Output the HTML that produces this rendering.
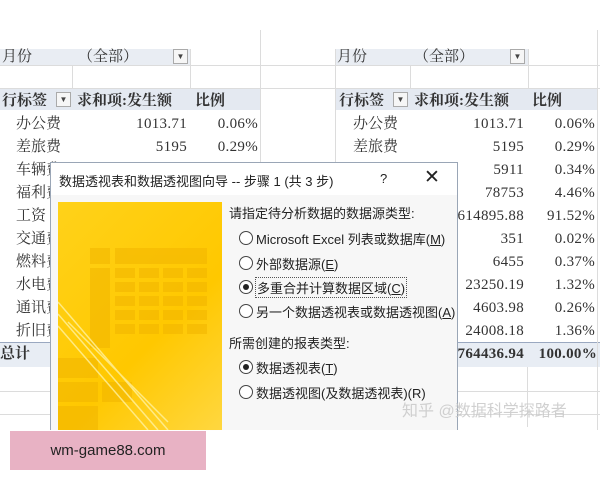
<!DOCTYPE html><html><head><meta charset="utf-8"><style>
*{margin:0;padding:0;box-sizing:border-box}
body{width:600px;height:480px;background:#fff;position:relative;overflow:hidden;font-family:"Liberation Serif","Noto Serif CJK SC",serif;color:#333}
.a{position:absolute;white-space:nowrap}
.s{font-family:"Liberation Sans","Noto Sans CJK SC",sans-serif;color:#222}
.hl{position:absolute;height:1px;background:#dcdcdc}
.vl{position:absolute;width:1px;background:#dcdcdc}
.r{position:absolute;width:14px;height:14px;border:1px solid #444;border-radius:50%;background:#fff}
.r.on::after{content:"";position:absolute;left:3px;top:3px;width:6px;height:6px;border-radius:50%;background:#222}
.dd{position:absolute;width:15px;height:15px;border:1px solid #aaa;background:#f6f6f6;font-size:8px;text-align:center;line-height:13px;color:#444}
.n{letter-spacing:0.3px}
</style></head><body>
<div class="a" style="left:0;top:49px;width:190px;height:16px;background:#e9edf3"></div>
<div class="a" style="left:335px;top:49px;width:193px;height:16px;background:#e9edf3"></div>
<div class="a" style="left:0;top:88px;width:260px;height:22px;background:#e4e9f1"></div>
<div class="a" style="left:335px;top:88px;width:262px;height:22px;background:#e4e9f1"></div>
<div class="a" style="left:0;top:342px;width:600px;height:25px;background:#e8edf4;border-top:1px solid #9aa8c0"></div>
<div class="hl" style="left:0;top:65px;width:600px"></div>
<div class="hl" style="left:0;top:88px;width:600px"></div>
<div class="hl" style="left:0;top:391px;width:600px"></div>
<div class="hl" style="left:0;top:414px;width:600px"></div>
<div class="vl" style="left:72px;top:65px;height:23px"></div>
<div class="vl" style="left:190px;top:49px;height:39px"></div>
<div class="vl" style="left:260px;top:30px;height:400px"></div>
<div class="vl" style="left:335px;top:49px;height:381px"></div>
<div class="vl" style="left:410px;top:65px;height:23px"></div>
<div class="vl" style="left:528px;top:49px;height:39px"></div>
<div class="vl" style="left:597px;top:30px;height:400px"></div>
<div class="vl" style="left:527px;top:367px;height:60px"></div>

<div class="a" style="left:2px;top:45px;font-size:15px">月份</div>
<div class="a" style="left:78px;top:45px;font-size:15px">（全部）</div>
<div class="dd" style="left:173px;top:49px">▼</div>
<div class="a" style="left:337px;top:45px;font-size:15px">月份</div>
<div class="a" style="left:414px;top:45px;font-size:15px">（全部）</div>
<div class="dd" style="left:510px;top:49px">▼</div>

<div class="a" style="left:2px;top:89px;font-size:15px;font-weight:bold">行标签</div>
<div class="dd" style="left:56px;top:92px">▼</div>
<div class="a" style="left:77px;top:89px;font-size:15px;font-weight:bold">求和项:发生额</div>
<div class="a" style="left:195px;top:89px;font-size:15px;font-weight:bold">比例</div>
<div class="a" style="left:339px;top:89px;font-size:15px;font-weight:bold">行标签</div>
<div class="dd" style="left:393px;top:92px">▼</div>
<div class="a" style="left:414px;top:89px;font-size:15px;font-weight:bold">求和项:发生额</div>
<div class="a" style="left:532px;top:89px;font-size:15px;font-weight:bold">比例</div>

<div class="a" style="left:16px;top:113px;font-size:15px;line-height:23px">办公费<br>差旅费<br>车辆费<br>福利费<br>工资<br>交通费<br>燃料费<br>水电费<br>通讯费<br>折旧费</div>
<div class="a" style="left:0;top:342px;font-size:15px;line-height:25px;font-weight:bold">总计</div>
<div class="a n" style="left:16px;top:113px;width:171px;text-align:right;font-size:15px;line-height:23px">1013.71<br>5195</div>
<div class="a n" style="left:190px;top:113px;width:68px;text-align:right;font-size:15px;line-height:23px">0.06%<br>0.29%</div>

<div class="a" style="left:353px;top:113px;font-size:15px;line-height:23px">办公费<br>差旅费</div>
<div class="a n" style="left:400px;top:113px;width:124px;text-align:right;font-size:15px;line-height:23px">1013.71<br>5195<br>5911<br>78753<br>614895.88<br>351<br>6455<br>23250.19<br>4603.98<br>24008.18</div>
<div class="a n" style="left:527px;top:113px;width:68px;text-align:right;font-size:15px;line-height:23px">0.06%<br>0.29%<br>0.34%<br>4.46%<br>91.52%<br>0.02%<br>0.37%<br>1.32%<br>0.26%<br>1.36%</div>
<div class="a n" style="left:400px;top:342px;width:124px;text-align:right;font-size:15px;line-height:25px;font-weight:bold">764436.94</div>
<div class="a n" style="left:527px;top:342px;width:70px;text-align:right;font-size:15px;line-height:25px;font-weight:bold">100.00%</div>

<div class="a" style="left:50px;top:162px;width:408px;height:268px;background:#f7f7f7;border:1px solid #9aa6b6;border-bottom:none"></div>
<div class="a" style="left:51px;top:163px;width:406px;height:32px;background:#fff"></div>
<div class="a s" style="left:59px;top:171px;font-size:13px">数据透视表和数据透视图向导 -- 步骤 1 (共 3 步)</div>
<div class="a s" style="left:380px;top:171px;font-size:13px">?</div>
<div class="a s" style="left:424px;top:166px;font-size:19px;font-weight:300">✕</div>
<div class="a" style="left:58px;top:202px;width:164px;height:228px;background:linear-gradient(135deg,#ffd21a,#ffc800 60%,#ffd740)">
<svg width="164" height="228" style="position:absolute;left:0;top:0">
<g fill="#f2b500" opacity=".55">
<rect x="32" y="46" width="20" height="16"/><rect x="57" y="46" width="92" height="16"/>
<rect x="32" y="66" width="20" height="80"/>
<g><rect x="57" y="66" width="20" height="10"/><rect x="81" y="66" width="20" height="10"/><rect x="105" y="66" width="20" height="10"/><rect x="129" y="66" width="20" height="10"/>
<rect x="57" y="80" width="20" height="10"/><rect x="81" y="80" width="20" height="10"/><rect x="105" y="80" width="20" height="10"/><rect x="129" y="80" width="20" height="10"/>
<rect x="57" y="94" width="20" height="10"/><rect x="81" y="94" width="20" height="10"/><rect x="105" y="94" width="20" height="10"/><rect x="129" y="94" width="20" height="10"/>
<rect x="57" y="108" width="20" height="10"/><rect x="81" y="108" width="20" height="10"/><rect x="105" y="108" width="20" height="10"/><rect x="129" y="108" width="20" height="10"/>
<rect x="57" y="122" width="20" height="10"/><rect x="81" y="122" width="20" height="10"/><rect x="105" y="122" width="20" height="10"/><rect x="129" y="122" width="20" height="10"/></g>
<rect x="0" y="156" width="40" height="20"/><rect x="0" y="180" width="40" height="20"/><rect x="44" y="180" width="30" height="20"/><rect x="0" y="204" width="40" height="24"/></g>
<g stroke="#fff2a0" stroke-width="1.5" fill="none" opacity=".8"><path d="M0 100 L110 228"/><path d="M0 112 L100 228"/><path d="M0 124 L90 228"/><path d="M10 120 L110 220"/></g>
</svg></div>
<div class="a s" style="left:229px;top:203px;font-size:13px">请指定待分析数据的数据源类型:</div>
<div class="r" style="left:239px;top:231px"></div><div class="a s" style="left:256px;top:229px;font-size:13px">Microsoft Excel 列表或数据库(<u>M</u>)</div>
<div class="r" style="left:239px;top:256px"></div><div class="a s" style="left:256px;top:254px;font-size:13px">外部数据源(<u>E</u>)</div>
<div class="r on" style="left:239px;top:280px"></div><div class="a s" style="left:255px;top:277px;font-size:13px;border:1px dotted #555;padding:0 1px">多重合并计算数据区域(<u>C</u>)</div>
<div class="r" style="left:239px;top:304px"></div><div class="a s" style="left:256px;top:302px;font-size:13px">另一个数据透视表或数据透视图(<u>A</u>)</div>
<div class="a s" style="left:229px;top:333px;font-size:13px">所需创建的报表类型:</div>
<div class="r on" style="left:239px;top:360px"></div><div class="a s" style="left:256px;top:358px;font-size:13px">数据透视表(<u>T</u>)</div>
<div class="r" style="left:239px;top:385px"></div><div class="a s" style="left:256px;top:383px;font-size:13px">数据透视图(及数据透视表)(R)</div>

<div class="a s" style="left:402px;top:397px;font-size:16px;color:rgba(200,200,200,.85)">知乎 @数据科学探路者</div>
<div class="a s" style="left:10px;top:431px;width:196px;height:39px;background:#e8b2c4;color:#222;font-size:15px;line-height:39px;text-align:center">wm-game88.com</div>
</body></html>
